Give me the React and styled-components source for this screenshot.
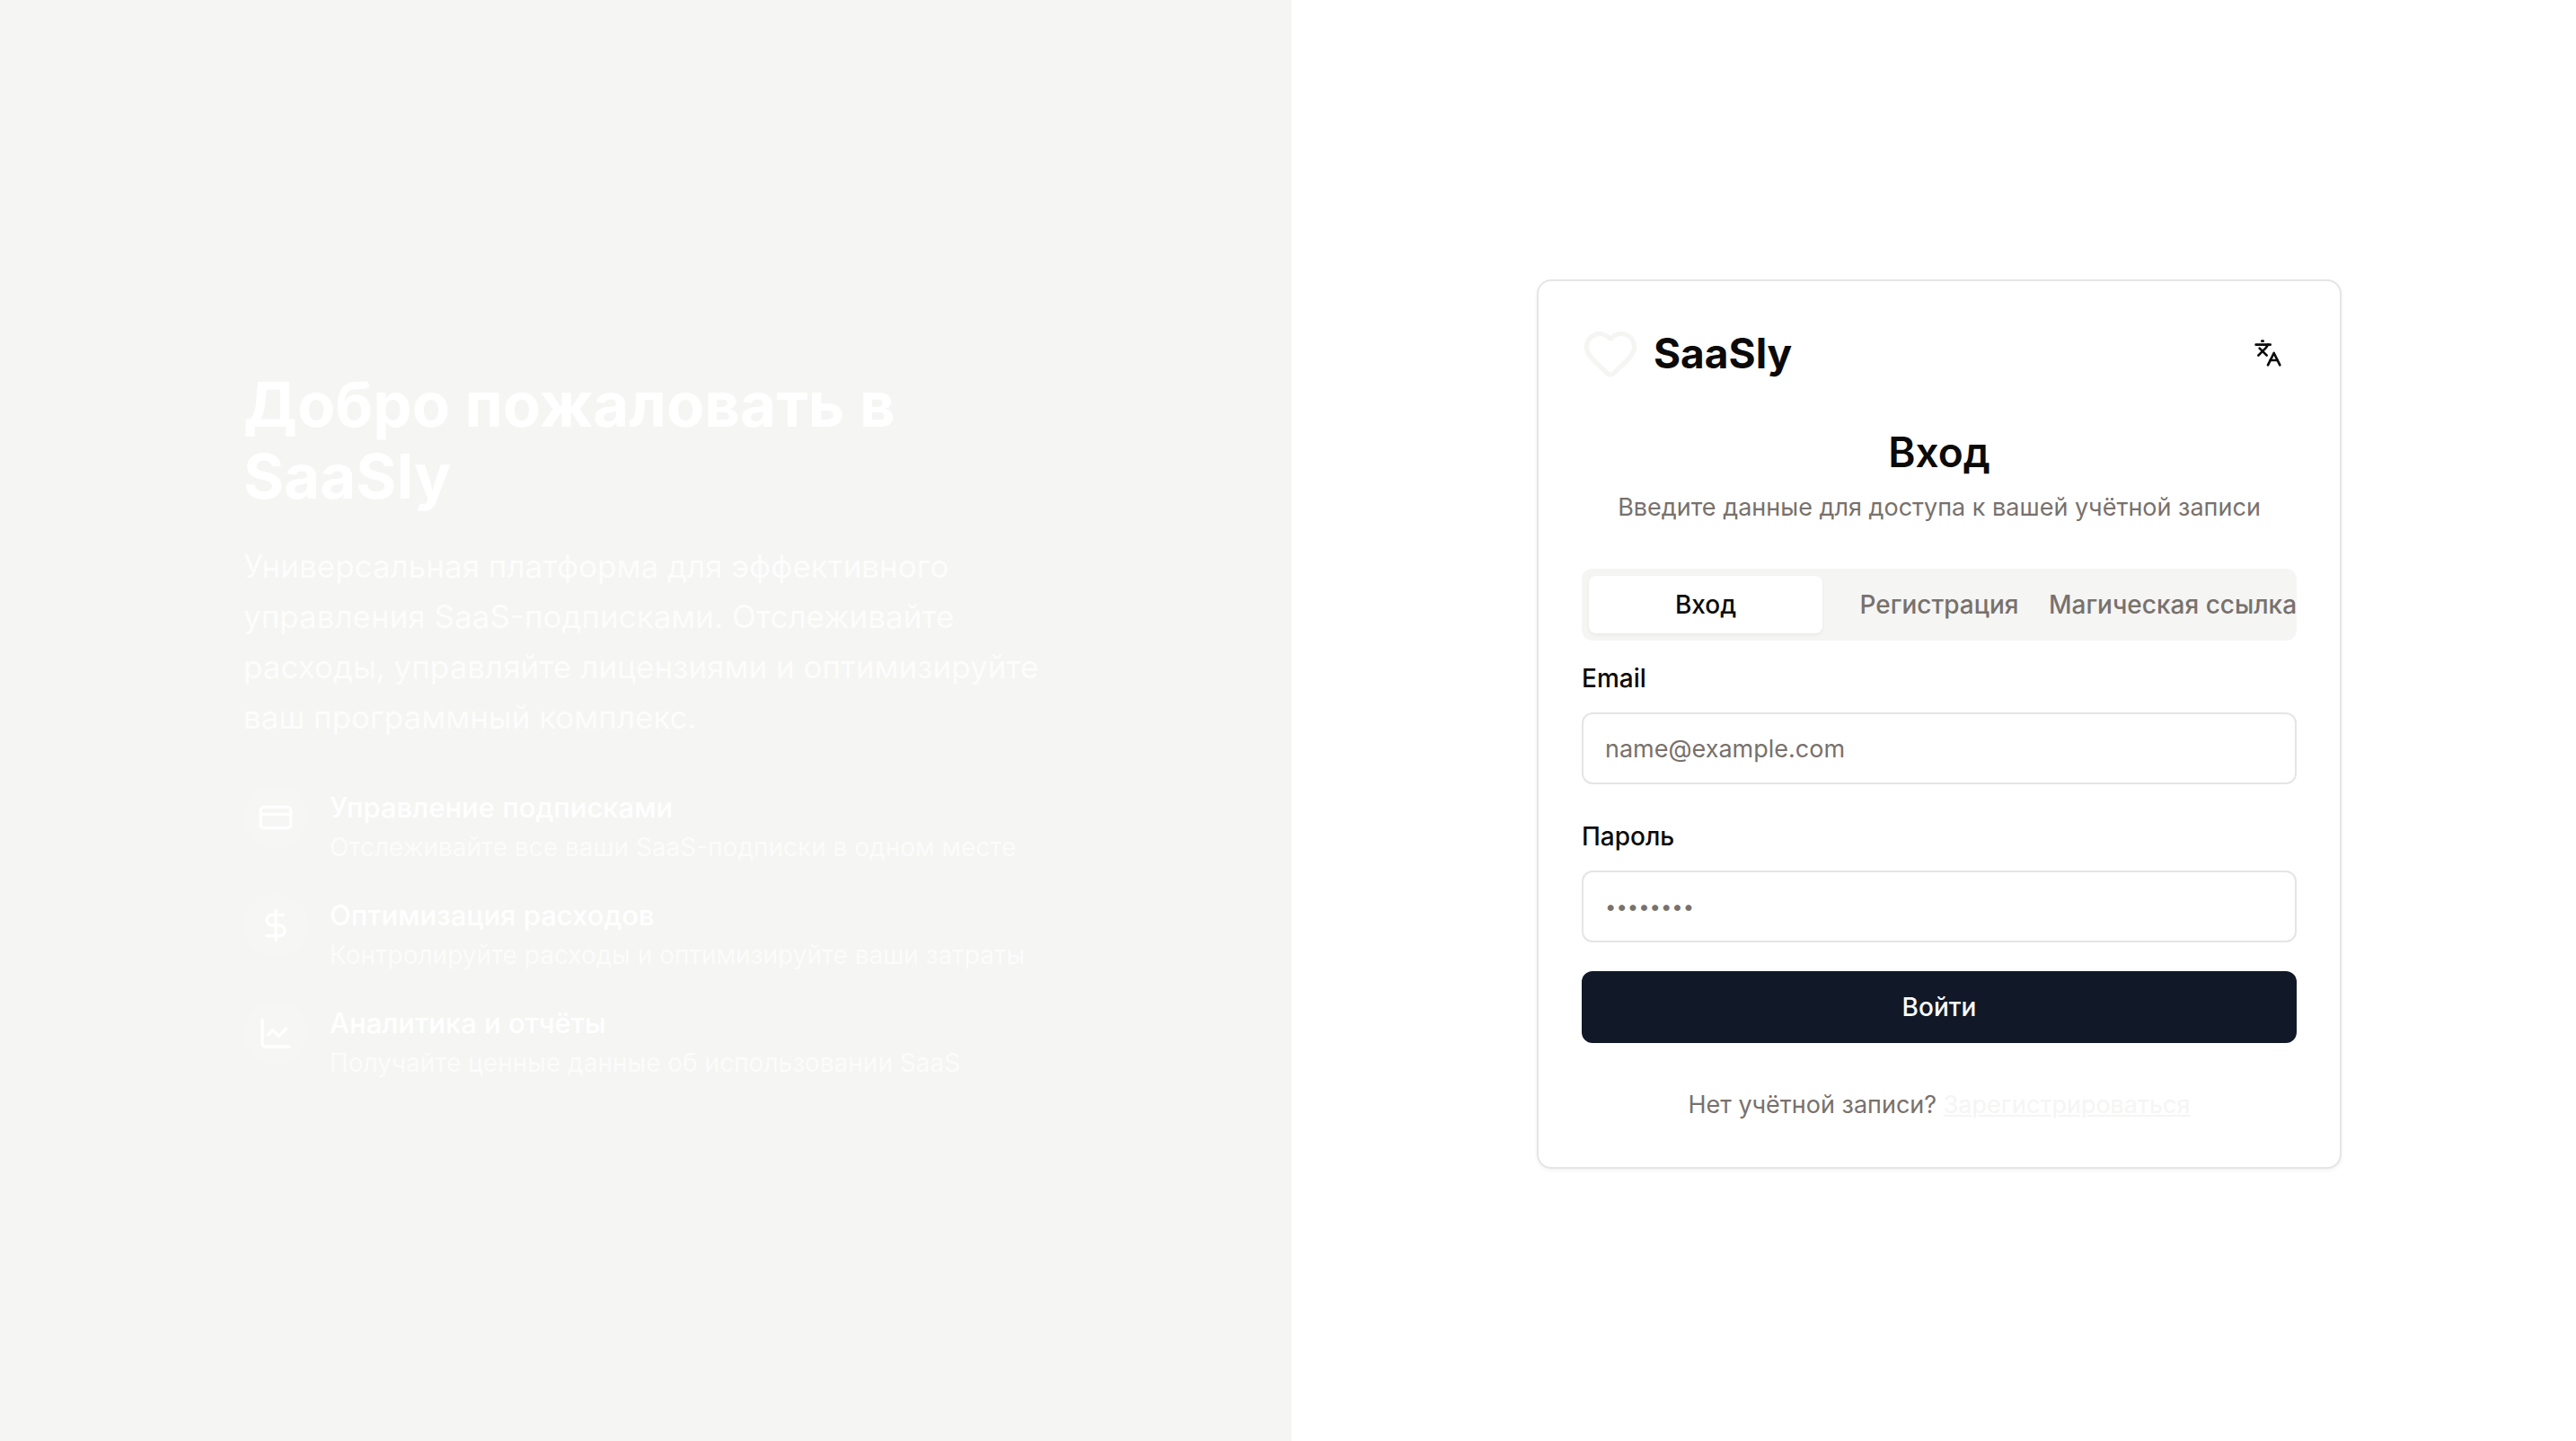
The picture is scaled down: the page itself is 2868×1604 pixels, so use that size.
import React, { useState } from 'react';
import styled, { createGlobalStyle } from 'styled-components';
import { ChartLine, CreditCard, DollarSign, Heart, Languages } from 'lucide-react';

const color = {
  background: '#ffffff',
  foreground: '#0c0a09',
  primary: '#f5f5f4',
  muted: '#f5f5f4',
  mutedText: '#78716c',
  border: '#e5e5e5',
  action: '#111827',
  actionText: '#f8fafc',
};

const GlobalStyle = createGlobalStyle`
  *, *::before, *::after { box-sizing: border-box; }
  html { overflow: hidden; }
  body {
    margin: 0;
    background: ${color.background};
    color: ${color.foreground};
    font-family: Inter, "Noto Sans", sans-serif;
    font-size: 32px;
    line-height: 48px;
    -webkit-font-smoothing: antialiased;
  }
  h1, h2, h3, p, ul { margin: 0; padding: 0; }
  button, input { font: inherit; color: inherit; }
`;

const Page = styled.div`
  display: grid;
  grid-template-columns: 1fr 1fr;
  gap: 2px;
  width: calc(100% + 10px);
  min-height: calc(100vh + 8px);
`;

const Column = styled.div`
  display: flex;
  align-items: center;
  justify-content: center;
  padding: 64px;
`;

const Promo = styled(Column).attrs({ as: 'aside' })`
  background: ${color.primary};
  color: #ffffff;
`;

const PromoContent = styled.div`
  width: 100%;
  max-width: 896px;
`;

const PromoTitle = styled.h1`
  margin-bottom: 32px;
  font-size: 69px;
  font-weight: 700;
  line-height: 80px;
`;

const PromoText = styled.p`
  margin-bottom: 48px;
  font-size: 35px;
  line-height: 56px;
  opacity: 0.8;
`;

const FeatureList = styled.ul`
  display: grid;
  gap: 32px;
  list-style: none;
`;

const Feature = styled.li`
  display: flex;
  align-items: flex-start;
  gap: 24px;
`;

const FeatureIcon = styled.span`
  display: flex;
  padding: 16px;
  border-radius: 50%;
  background: rgba(255, 255, 255, 0.1);
`;

const FeatureTitle = styled.h3`
  font-size: 31px;
  font-weight: 500;
  line-height: 50px;
`;

const FeatureText = styled.p`
  font-size: 28px;
  line-height: 38px;
  opacity: 0.7;
`;

const Card = styled.section`
  width: 100%;
  max-width: 896px;
  padding: 48px;
  border: 2px solid ${color.border};
  border-radius: 16px;
  background: ${color.background};
  box-shadow: 0 2px 4px rgba(0, 0, 0, 0.05);
`;

const CardBar = styled.div`
  display: flex;
  align-items: center;
  justify-content: space-between;
  margin-bottom: 44px;
`;

const Brand = styled.div`
  display: flex;
  align-items: center;
  gap: 16px;
  font-size: 46px;
  font-weight: 700;
  line-height: 64px;

  svg { color: ${color.primary}; }
`;

const IconButton = styled.button`
  display: flex;
  align-items: center;
  justify-content: center;
  width: 64px;
  height: 64px;
  padding: 0;
  border: 0;
  border-radius: 12px;
  background: transparent;
  cursor: pointer;
`;

const CardHeading = styled.header`
  display: grid;
  gap: 8px;
  margin-bottom: 48px;
  text-align: center;
`;

const CardTitle = styled.h2`
  font-size: 46px;
  font-weight: 600;
  line-height: 68px;
`;

const CardText = styled.p`
  color: ${color.mutedText};
  font-size: 27px;
  line-height: 40px;
`;

const Tabs = styled.div`
  display: grid;
  grid-template-columns: repeat(3, minmax(0, 1fr));
  height: 80px;
  margin-bottom: 16px;
  padding: 8px;
  border-radius: 12px;
  background: ${color.muted};
`;

const Tab = styled.button`
  display: flex;
  align-items: center;
  justify-content: center;
  padding: 12px 24px;
  border: 0;
  border-radius: 8px;
  background: ${({ $active }) => ($active ? color.background : 'transparent')};
  box-shadow: ${({ $active }) => ($active ? '0 2px 4px rgba(0, 0, 0, 0.05)' : 'none')};
  color: ${({ $active }) => ($active ? color.foreground : color.mutedText)};
  font-size: 28px;
  font-weight: 500;
  line-height: 40px;
  white-space: nowrap;
  cursor: pointer;
`;

const Form = styled.form`
  display: grid;
  gap: 32px;
  margin-bottom: 48px;
`;

const Field = styled.div`
  display: grid;
  gap: 12px;
`;

const Label = styled.label`
  font-size: 28px;
  font-weight: 500;
  line-height: 52px;
`;

const Input = styled.input`
  width: 100%;
  height: 80px;
  padding: 16px 24px;
  border: 2px solid ${color.border};
  border-radius: 12px;
  background: ${color.background};
  font-size: 27px;
  line-height: 40px;

  &::placeholder {
    color: ${color.mutedText};
    opacity: 1;
  }

  &[type='password'] {
    font-size: 22px;
  }
`;

const SubmitButton = styled.button`
  height: 80px;
  padding: 16px 32px;
  border: 0;
  border-radius: 12px;
  background: ${color.action};
  color: ${color.actionText};
  font-size: 28px;
  font-weight: 500;
  line-height: 40px;
  cursor: pointer;
`;

const CardFooter = styled.p`
  color: ${color.mutedText};
  font-size: 27px;
  line-height: 42px;
  text-align: center;
`;

const FooterLink = styled.a`
  color: ${color.primary};
  text-decoration: underline;
`;

const features = [
  {
    icon: CreditCard,
    title: 'Управление подписками',
    text: 'Отслеживайте все ваши SaaS-подписки в одном месте',
  },
  {
    icon: DollarSign,
    title: 'Оптимизация расходов',
    text: 'Контролируйте расходы и оптимизируйте ваши затраты',
  },
  {
    icon: ChartLine,
    title: 'Аналитика и отчёты',
    text: 'Получайте ценные данные об использовании SaaS',
  },
];

const tabs = ['Вход', 'Регистрация', 'Магическая ссылка'];

export default function App() {
  const [activeTab, setActiveTab] = useState(tabs[0]);

  return (
    <>
      <GlobalStyle />
      <Page>
        <Promo>
          <PromoContent>
            <PromoTitle>Добро пожаловать в SaaSly</PromoTitle>
            <PromoText>
              Универсальная платформа для эффективного управления SaaS-подписками. Отслеживайте
              расходы, управляйте лицензиями и оптимизируйте ваш программный комплекс.
            </PromoText>
            <FeatureList>
              {features.map(({ icon: Icon, title, text }) => (
                <Feature key={title}>
                  <FeatureIcon>
                    <Icon size={40} />
                  </FeatureIcon>
                  <div>
                    <FeatureTitle>{title}</FeatureTitle>
                    <FeatureText>{text}</FeatureText>
                  </div>
                </Feature>
              ))}
            </FeatureList>
          </PromoContent>
        </Promo>
        <Column as="main">
          <Card>
            <CardBar>
              <Brand>
                <Heart size={64} />
                <span>SaaSly</span>
              </Brand>
              <IconButton type="button" aria-label="Язык">
                <Languages size={32} />
              </IconButton>
            </CardBar>
            <CardHeading>
              <CardTitle>Вход</CardTitle>
              <CardText>Введите данные для доступа к вашей учётной записи</CardText>
            </CardHeading>
            <Tabs role="tablist">
              {tabs.map((tab) => (
                <Tab
                  key={tab}
                  type="button"
                  role="tab"
                  aria-selected={tab === activeTab}
                  $active={tab === activeTab}
                  onClick={() => setActiveTab(tab)}
                >
                  {tab}
                </Tab>
              ))}
            </Tabs>
            <Form onSubmit={(event) => event.preventDefault()}>
              <Field>
                <Label htmlFor="email">Email</Label>
                <Input id="email" type="email" placeholder="name@example.com" />
              </Field>
              <Field>
                <Label htmlFor="password">Пароль</Label>
                <Input id="password" type="password" placeholder="••••••••" />
              </Field>
              <SubmitButton type="submit">Войти</SubmitButton>
            </Form>
            <CardFooter>
              Нет учётной записи? <FooterLink href="#register">Зарегистрироваться</FooterLink>
            </CardFooter>
          </Card>
        </Column>
      </Page>
    </>
  );
}
